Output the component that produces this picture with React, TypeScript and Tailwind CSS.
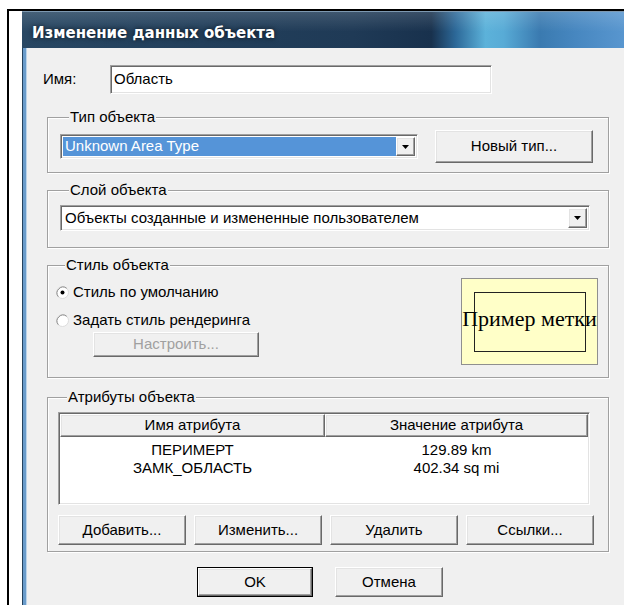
import React from "react";

// classic 3D bevels
const sunken =
  "border border-t-[#a0a0a0] border-l-[#a0a0a0] border-r-white border-b-white shadow-[inset_1px_1px_0_#696969,inset_-1px_-1px_0_#e3e3e3]";
const raised =
  "border border-t-white border-l-white border-r-[#696969] border-b-[#696969] shadow-[inset_-1px_-1px_0_#a0a0a0,inset_1px_1px_0_#e3e3e3]";

type ButtonProps = {
  children: React.ReactNode;
  className?: string;
  disabled?: boolean;
};

const Button = ({ children, className = "", disabled }: ButtonProps) => (
  <button
    type="button"
    disabled={disabled}
    className={`${raised} flex items-center justify-center bg-[#f0f0f0] ${
      disabled ? "text-[#a0a0a0]" : "text-black"
    } ${className}`}
  >
    {children}
  </button>
);

const DropButton = () => (
  <span
    className={`${raised} flex w-[19px] shrink-0 items-center justify-center bg-[#f0f0f0]`}
  >
    <svg width="7" height="4" viewBox="0 0 7 4">
      <path d="M0 0h7L3.5 4z" fill="#000" />
    </svg>
  </span>
);

const Radio = ({ checked }: { checked?: boolean }) => (
  <svg width="13" height="13" viewBox="0 0 13 13" className="shrink-0">
    <circle cx="6.5" cy="6.5" r="6" fill="#fff" stroke="#dcdcdc" />
    <path d="M2.3 10.7A6 6 0 0 1 10.7 2.3" fill="none" stroke="#8a8a8a" />
    {checked && <circle cx="6.5" cy="6.5" r="2" fill="#000" />}
  </svg>
);

const Group = ({
  title,
  className = "",
  children,
}: {
  title: string;
  className?: string;
  children: React.ReactNode;
}) => (
  <fieldset
    className={`ml-[4px] w-[562px] border border-[#a0a0a0] shadow-[inset_1px_1px_0_#fff,1px_1px_0_#fff] ${className}`}
  >
    <legend className="ml-[9px] bg-[#f0f0f0] px-[1px] leading-[16px]">
      {title}
    </legend>
    {children}
  </fieldset>
);

const attributes = [
  { name: "ПЕРИМЕРТ", value: "129.89 km" },
  { name: "ЗАМК_ОБЛАСТЬ", value: "402.34 sq mi" },
];

export default function App() {
  return (
    <div className="h-[605px] w-[624px] overflow-hidden bg-white pl-[7px] pt-[9px]">
      <div className="flex h-full border-l-2 border-t-2 border-black pl-[13px]">
        <div className="flex flex-1 flex-col">
          {/* Aero title bar */}
          <div className="flex h-[37px] shrink-0 items-center border-t border-[#7d98b0] bg-[linear-gradient(180deg,rgba(255,255,255,0.14),rgba(255,255,255,0)_55%),linear-gradient(90deg,#284763_0%,#223f5b_30%,#1f3a56_55%,#18314d_68%,#2c6898_72%,#5cb2da_77%,#58abd6_80%,#3a7ab0_86%,#4787c0_92%,#5896cf_100%)] pl-[10px] pt-[6px]">
            <span className="font-['DejaVu_Sans',sans-serif] text-[15px] font-bold text-white [text-shadow:0_0_5px_rgba(0,0,0,0.7)]">
              Изменение данных объекта
            </span>
          </div>

          <div className="flex flex-1">
            {/* window frame */}
            <div className="w-[5px] shrink-0 border-l border-[#24425e] bg-[#6a9ccb] shadow-[inset_-1px_0_0_#bcd4ea]" />

            <div className="flex-1 bg-[#f0f0f0] pl-[16px] font-['Liberation_Sans',Arial,sans-serif] text-[15px] text-black">
              <div className="mt-[17px] flex items-center">
                <span className="w-[67px]">Имя:</span>
                <div
                  className={`${sunken} flex h-[29px] w-[382px] items-center bg-white px-[3px]`}
                >
                  Область
                </div>
              </div>

              <Group title="Тип объекта" className="mt-[15px] pb-[9px] pl-[12px] pt-[5px]">
                <div className="flex h-[33px] items-center gap-[17px]">
                  <div
                    className={`${sunken} flex h-[25px] w-[358px] bg-white p-[2px]`}
                  >
                    <span className="flex flex-1 items-center bg-[#5594d8] px-[2px] text-white">
                      Unknown Area Type
                    </span>
                    <DropButton />
                  </div>
                  <Button className="h-[33px] w-[158px]">Новый тип...</Button>
                </div>
              </Group>

              <Group title="Слой объекта" className="mt-[9px] pb-[16px] pl-[12px] pt-[7px]">
                <div className={`${sunken} flex h-[26px] w-[530px] bg-white p-[2px]`}>
                  <span className="flex flex-1 items-center px-[2px]">
                    Объекты созданные и измененные пользователем
                  </span>
                  <DropButton />
                </div>
              </Group>

              <Group title="Стиль объекта" className="mt-[9px] pb-[12px] pl-[8px] pr-[10px] pt-[5px]">
                <div className="flex justify-between">
                  <div className="flex flex-col">
                    <label className="mt-[3px] flex h-[22px] items-center gap-[4px]">
                      <Radio checked />
                      Стиль по умолчанию
                    </label>
                    <label className="mt-[6px] flex h-[22px] items-center gap-[4px]">
                      <Radio />
                      Задать стиль рендеринга
                    </label>
                    <Button disabled className="ml-[37px] mt-[1px] h-[25px] w-[166px]">
                      Настроить...
                    </Button>
                  </div>

                  {/* label style sample */}
                  <div className="relative flex h-[87px] w-[137px] items-center justify-center border border-[#8f8f8f] bg-[#ffffc8]">
                    <div className="absolute bottom-[12px] left-[12px] right-[11px] top-[13px] border-[1.5px] border-[#222]" />
                    <span className="relative mb-[6px] whitespace-nowrap font-['Liberation_Serif',serif] text-[22px] leading-none">
                      Пример метки
                    </span>
                  </div>
                </div>
              </Group>

              <Group title="Атрибуты объекта" className="mt-[11px] pb-[6px] pl-[10px] pt-[7px]">
                <div className={`${sunken} flex h-[93px] w-[532px] flex-col bg-white p-[1px]`}>
                  <div className="flex h-[23px] shrink-0">
                    <div className={`${raised} flex w-[265px] items-center justify-center bg-[#f0f0f0]`}>
                      Имя атрибута
                    </div>
                    <div className={`${raised} flex flex-1 items-center justify-center bg-[#f0f0f0]`}>
                      Значение атрибута
                    </div>
                  </div>
                  <div className="pt-[4px]">
                    {attributes.map((a) => (
                      <div key={a.name} className="flex h-[18px] items-center">
                        <span className="w-[265px] text-center">{a.name}</span>
                        <span className="flex-1 text-center">{a.value}</span>
                      </div>
                    ))}
                  </div>
                </div>
                <div className="mt-[10px] flex gap-[8px]">
                  <Button className="h-[30px] w-[128px]">Добавить...</Button>
                  <Button className="h-[30px] w-[128px]">Изменить...</Button>
                  <Button className="h-[30px] w-[128px]">Удалить</Button>
                  <Button className="h-[30px] w-[128px]">Ссылки...</Button>
                </div>
              </Group>

              <div className="ml-[154px] mt-[15px] flex gap-[22px]">
                <div className="h-[30px] w-[116px] border border-black">
                  <Button className="h-full w-full">OK</Button>
                </div>
                <Button className="h-[30px] w-[108px]">Отмена</Button>
              </div>
            </div>
          </div>
        </div>
      </div>
    </div>
  );
}
